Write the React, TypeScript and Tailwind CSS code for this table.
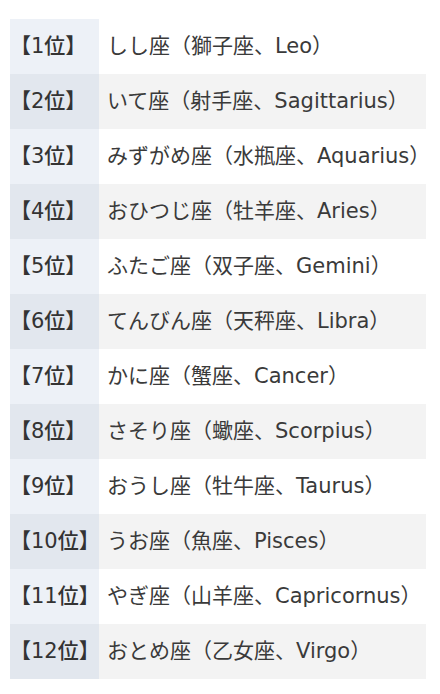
const ranking = [
  { rank: "【1位】", sign: "しし座（獅子座、Leo）" },
  { rank: "【2位】", sign: "いて座（射手座、Sagittarius）" },
  { rank: "【3位】", sign: "みずがめ座（水瓶座、Aquarius）" },
  { rank: "【4位】", sign: "おひつじ座（牡羊座、Aries）" },
  { rank: "【5位】", sign: "ふたご座（双子座、Gemini）" },
  { rank: "【6位】", sign: "てんびん座（天秤座、Libra）" },
  { rank: "【7位】", sign: "かに座（蟹座、Cancer）" },
  { rank: "【8位】", sign: "さそり座（蠍座、Scorpius）" },
  { rank: "【9位】", sign: "おうし座（牡牛座、Taurus）" },
  { rank: "【10位】", sign: "うお座（魚座、Pisces）" },
  { rank: "【11位】", sign: "やぎ座（山羊座、Capricornus）" },
  { rank: "【12位】", sign: "おとめ座（乙女座、Virgo）" },
];

export default function App() {
  return (
    <div
      className="min-h-[694px] w-[440px] bg-white pt-[19px] pl-[10px] text-[21px] text-[#333]"
      style={{ fontFamily: '"DejaVu Sans", "Noto Sans CJK JP", sans-serif' }}
    >
      <div className="flex w-[416px] flex-col">
        {ranking.map((row, i) => (
          <div key={row.rank} className="flex h-[55px]">
            <div
              className={
                "flex w-[89px] shrink-0 items-center font-medium whitespace-nowrap " +
                (i % 2 === 0 ? "bg-[#edf1f7]" : "bg-[#e2e7ee]")
              }
            >
              {row.rank}
            </div>
            <div
              className={
                "flex flex-1 items-center pl-[8px] whitespace-nowrap text-[#3a3a3a] " +
                (i % 2 === 0 ? "bg-white" : "bg-[#f3f3f3]")
              }
            >
              {row.sign}
            </div>
          </div>
        ))}
      </div>
    </div>
  );
}
